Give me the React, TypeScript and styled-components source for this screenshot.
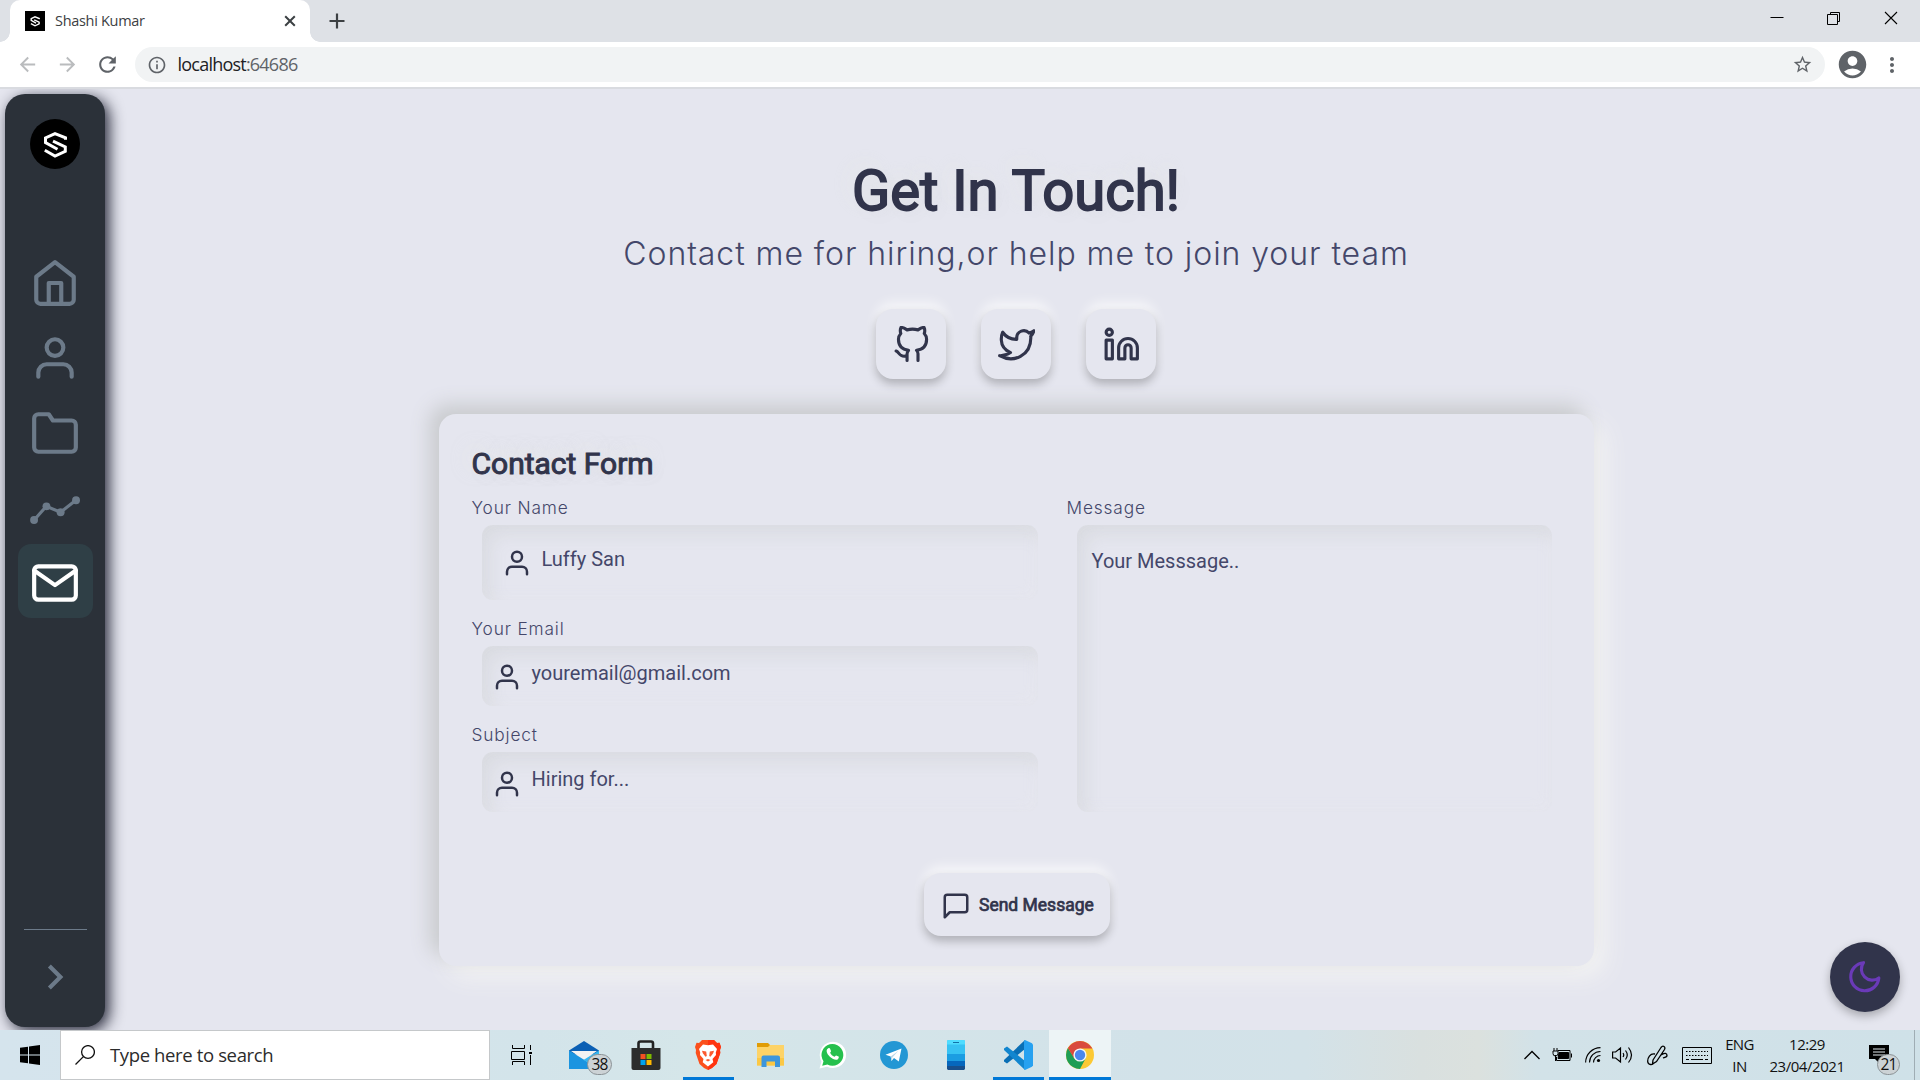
import React from "react";
import styled, { createGlobalStyle } from "styled-components";
import {
  FiFolder,
  FiGithub,
  FiHome,
  FiLinkedin,
  FiMail,
  FiMessageSquare,
  FiMoon,
  FiTwitter,
  FiUser,
} from "react-icons/fi";
import { MdAccountCircle, MdArrowBack, MdArrowForward, MdChevronRight, MdInfoOutline, MdMoreVert, MdRefresh, MdStarBorder } from "react-icons/md";

const BG = "#e5e6ef";
const INK = "#31344b";
const SOFT_INK = "#44476a";
const SIDE = "#2b3139";
const MUTED = "#6c7a89";
const ROBOTO = `Roboto, "Liberation Sans", sans-serif`;
const GEO = `Inter, "Open Sans", sans-serif`;
const SYSTEM = `"Open Sans", "Noto Sans", sans-serif`;

const Global = createGlobalStyle`
  * { box-sizing: border-box; }
  body { margin: 0; background: ${BG}; overflow: hidden; }
  svg { display: block; flex: none; }
`;

const Screen = styled.div`
  width: 1920px;
  height: 1080px;
  display: flex;
  flex-direction: column;
  background: ${BG};
`;

/* ---------- browser ---------- */
const TabStrip = styled.div`
  height: 42px;
  display: flex;
  align-items: flex-start;
  background: #dee1e6;
  padding-left: 10px;
`;
const Tab = styled.div`
  position: relative;
  width: 300px;
  height: 42px;
  background: #fff;
  border-radius: 10px 10px 0 0;
  display: flex;
  align-items: center;
  padding: 0 14px 0 15px;
  &::before,
  &::after {
    content: "";
    position: absolute;
    bottom: 0;
    width: 10px;
    height: 10px;
  }
  &::before {
    left: -10px;
    background: radial-gradient(circle at 0 0, transparent 9.5px, #fff 10px);
  }
  &::after {
    right: -10px;
    background: radial-gradient(circle at 100% 0, transparent 9.5px, #fff 10px);
  }
`;
const TabTitle = styled.span`
  flex: 1;
  margin-left: 10px;
  font: 14.5px/20px ${SYSTEM};
  letter-spacing: -0.3px;
  color: #3c4043;
`;
const NewTab = styled.div`
  padding: 13px 0 0 19px;
`;
const WindowButtons = styled.div`
  margin-left: auto;
  display: flex;
  gap: 43px;
  padding: 11px 22px 0 0;
`;
const Toolbar = styled.div`
  height: 47px;
  display: flex;
  align-items: center;
  background: #fff;
  border-bottom: 2px solid #d9dbe0;
  padding: 0 10px 0 16px;
  color: #5f6368;
`;
const NavIcons = styled.div`
  display: flex;
  gap: 16.5px;
  width: 119px;
  align-items: center;
`;
const Omnibox = styled.div`
  width: 1690px;
  height: 35px;
  border-radius: 18px;
  background: #f1f3f4;
  display: flex;
  align-items: center;
  padding: 0 12px 0 12px;
`;
const Url = styled.span`
  flex: 1;
  margin-left: 10.5px;
  margin-top: -1px;
  font: 18px/24px ${SYSTEM};
  letter-spacing: -0.78px;
  color: #5f6368;
  b {
    font-weight: 400;
    color: #202124;
  }
`;
const Profile = styled.div`
  margin: 0 11px 0 11px;
`;

/* ---------- page ---------- */
const Page = styled.div`
  height: 941px;
  position: relative;
  display: flex;
  overflow: hidden;
  background: ${BG};
`;
const Sidebar = styled.nav`
  width: 100px;
  height: 933px;
  margin: 5px 7px 0 5px;
  border-radius: 20px;
  background: ${SIDE};
  box-shadow: 4px 4px 15px rgba(15, 18, 35, 0.9);
  display: flex;
  flex-direction: column;
  align-items: center;
  padding-top: 25px;
`;
const Brand = styled.div`
  width: 50px;
  height: 50px;
  border-radius: 50%;
  background: #000;
  margin-bottom: 76.5px;
`;
const SideLink = styled.div<{ $active?: boolean }>`
  width: 75px;
  height: ${(p) => (p.$active ? 74 : 75)}px;
  margin-top: ${(p) => (p.$active ? -1.5 : 0)}px;
  padding-top: ${(p) => (p.$active ? 3 : 0)}px;
  border-radius: 13px;
  display: grid;
  place-items: center;
  color: ${(p) => (p.$active ? "#fff" : MUTED)};
  background: ${(p) => (p.$active ? "#2f3f46" : "transparent")};
`;
const SideFooter = styled.div`
  margin-top: auto;
  width: 63px;
  height: 98px;
  border-top: 1px solid ${MUTED};
  color: ${MUTED};
  display: flex;
  justify-content: center;
  padding-top: 22px;
`;
const Main = styled.main`
  flex: 1;
  display: flex;
  flex-direction: column;
  align-items: center;
  padding-top: 67px;
`;
const Heading = styled.h1`
  margin: 0;
  font: 400 56.2px/70px ${ROBOTO};
  -webkit-text-stroke: 1.8px ${INK};
  color: ${INK};
  text-shadow: 6px 6px 18px rgba(0, 0, 0, 0.04), -6px -6px 18px rgba(233, 236, 225, 0.4);
`;
const Lead = styled.p`
  margin: 8px 0 35px;
  font: 300 32px/40px ${GEO};
  letter-spacing: 0.93px;
  color: ${SOFT_INK};
  white-space: nowrap;
`;
const Socials = styled.div`
  display: flex;
  gap: 35px;
  margin-bottom: 35px;
`;
const raised = `
  background: ${BG};
  box-shadow: 0 5px 10px rgba(0, 0, 0, 0.24), 0 -7px 12px rgba(255, 255, 255, 0.65);
  border-radius: 17px;
  color: ${INK};
`;
const Social = styled.a`
  width: 70px;
  height: 70px;
  display: grid;
  place-items: center;
  ${raised}
  svg {
    margin: 1px 0 0 1px;
  }
`;
const Card = styled.section`
  width: 1155px;
  height: 552px;
  margin-left: 1px;
  border-radius: 17px;
  background: ${BG};
  box-shadow: -9px -9px 20px #c8cacd, 10px 10px 24px #f4f4f3;
  padding: 32px 32.5px 0;
  display: flex;
  flex-direction: column;
`;
const CardTitle = styled.h2`
  margin: 0 0 15px;
  font: 400 30px/36px ${ROBOTO};
  -webkit-text-stroke: 1px ${INK};
  color: ${INK};
  text-shadow: 5px 6px 16px rgba(0, 0, 0, 0.06), -5px -5px 16px rgba(238, 240, 228, 0.5);
`;
const Fields = styled.div`
  display: grid;
  grid-template-columns: 595px 1fr;
`;
const Column = styled.div`
  display: flex;
  flex-direction: column;
`;
const Label = styled.label`
  margin-bottom: 7px;
  padding-top: 0.7px;
  font: 300 17.3px/20px ${GEO};
  letter-spacing: 0.85px;
  color: ${SOFT_INK};
`;
const inset = `
  margin-left: 10px;
  border-radius: 11px;
  box-shadow: inset 8px 9px 18px rgba(140, 144, 130, 0.12), inset -4px -4px 12px rgba(235, 236, 242, 0.4);
  font: 400 20px/24px ${ROBOTO};
  color: ${SOFT_INK};
`;
const Field = styled.div<{ $tall?: boolean }>`
  ${inset}
  width: 556px;
  height: ${(p) => (p.$tall ? 75 : 60)}px;
  margin-bottom: 18.5px;
  display: flex;
  padding: ${(p) => (p.$tall ? "22px 20px" : "15px 10px")};
  gap: 10px;
  svg {
    margin-top: 1.5px;
    color: ${INK};
  }
`;
const TextArea = styled.div`
  ${inset}
  width: 475px;
  height: 287px;
  padding: 24px 15px;
`;
const Send = styled.button`
  ${raised}
  align-self: center;
  border: 0;
  width: 186px;
  height: 63px;
  margin: 42.5px 0 0 1px;
  padding: 0 0 0 17px;
  display: flex;
  align-items: center;
  gap: 8px;
  font: 400 17.5px/24px ${ROBOTO};
  -webkit-text-stroke: 0.7px ${INK};
  white-space: nowrap;
  svg {
    margin-top: 3px;
  }
`;
const ThemeToggle = styled.button`
  position: absolute;
  right: 20px;
  bottom: 18px;
  width: 70px;
  height: 70px;
  padding: 0;
  border: 0;
  border-radius: 50%;
  background: ${INK};
  color: #6a3ab8;
  display: grid;
  place-items: center;
  box-shadow: 0 4px 10px rgba(0, 0, 0, 0.28);
`;

/* ---------- taskbar ---------- */
const Taskbar = styled.div`
  height: 50px;
  display: flex;
  background: linear-gradient(90deg, #d5e4ed 0%, #d3e4ea 28%, #d5e6e9 36%, #d2e2e9 60%, #d3e2e8 68%, #d9e0df 74%, #dbe1de 77%, #d2e2e8 80%, #cfe1e8 100%);
  color: #111;
`;
const Start = styled.div`
  width: 60px;
  display: grid;
  place-items: center;
`;
const Search = styled.div`
  width: 430px;
  border: 1px solid #c5c8ca;
  background: #fff;
  display: flex;
  align-items: center;
  padding-left: 14px;
`;
const SearchText = styled.span`
  margin-left: 15px;
  font: 18.5px/24px ${SYSTEM};
  letter-spacing: -0.37px;
  color: #2b2b2b;
`;
const TaskApp = styled.div<{ $running?: boolean; $active?: boolean }>`
  width: 62px;
  height: 50px;
  position: relative;
  display: grid;
  place-items: center;
  background: ${(p) => (p.$active ? "#edf4f6" : "transparent")};
  &::after {
    content: "";
    position: absolute;
    bottom: 0;
    left: ${(p) => (p.$active ? 0 : 6)}px;
    right: ${(p) => (p.$active ? 0 : 5)}px;
    height: 3px;
    background: ${(p) => (p.$running ? "#0078d7" : "transparent")};
  }
`;
const Apps = styled.div`
  display: flex;
  padding-left: 1px;
`;
const Badge = styled.span<{ $x: number; $y: number; $w: number }>`
  position: absolute;
  left: ${(p) => p.$x}px;
  top: ${(p) => p.$y}px;
  width: ${(p) => p.$w}px;
  height: 21px;
  border-radius: 11px;
  border: 1px solid #8b9296;
  background: #ccd2d5;
  font: 500 15.5px/18px ${SYSTEM};
  letter-spacing: -0.8px;
  text-align: center;
  color: #111;
`;
const Tray = styled.div`
  margin-left: auto;
  display: flex;
  align-items: center;
`;
const TraySlot = styled.div<{ $w: number }>`
  width: ${(p) => p.$w}px;
  display: flex;
`;
const TwoLine = styled.div<{ $w: number; $gap?: number; $track?: number }>`
  width: ${(p) => p.$w}px;
  margin: -1px ${(p) => p.$gap ?? 0}px 0 0;
  text-align: center;
  font: 15px/22px ${SYSTEM};
  letter-spacing: ${(p) => p.$track ?? -0.5}px;
  white-space: pre-line;
`;
const Action = styled.div`
  position: relative;
  width: 45px;
  height: 50px;
  padding-top: 15px;
`;
const ShowDesktop = styled.div`
  width: 6px;
  height: 50px;
  border-left: 1px solid #9fadb4;
`;

const SMark = ({ size, color = "#fff" }: { size: number; color?: string }) => (
  <svg width={size} height={size} viewBox="0 0 50 50" fill="none" stroke={color} strokeWidth="3">
    <path d="M35.500 20.800V18.800L25 14.600 15.500 19v4.600L27.500 30.200" />
    <path d="M23 22.200 35.300 28v4.300L25 37 14.800 31.300" />
  </svg>
);

const Timeline = () => (
  <svg width="50" height="50" viewBox="0 0 24 24" fill="currentColor">
    <path d="M2 17.8 7.8 11.2 14.7 14 22 8.3" fill="none" stroke="currentColor" strokeWidth="1.5" />
    <circle cx="1.95" cy="17.8" r="1.9" />
    <circle cx="7.9" cy="11.2" r="1.9" />
    <circle cx="14.7" cy="14" r="1.9" />
    <circle cx="22.1" cy="8.3" r="1.9" />
  </svg>
);

const Line = ({ w, h, d, sw = 1.2, fill = "none" }: { w: number; h: number; d: string; sw?: number; fill?: string }) => (
  <svg width={w} height={h} viewBox={`0 0 ${w} ${h}`} fill={fill} stroke="#000" strokeWidth={sw}>
    <path d={d} />
  </svg>
);

const MailIcon = () => (
  <svg width="30" height="30" viewBox="0 0 30 30">
    <path d="M0 10.500 15 1l15 9.500v4H0z" fill="#0a5fb4" />
    <path d="M2 11h26L15 20z" fill="#f2f2f2" />
    <path d="M0 10.500l30 18.500H0z" fill="#1b94e0" />
    <path d="M30 10.500v18.500L14.500 20z" fill="#35b5ef" />
  </svg>
);
const StoreIcon = () => (
  <svg width="30" height="30" viewBox="0 0 30 30">
    <path d="M7.500 9V3.500q0-2 2-2h10.500q2 0 2 2V9" fill="none" stroke="#222" strokeWidth="2.600" />
    <path d="M.5 8h29v20a2 2 0 0 1-2 2h-25a2 2 0 0 1-2-2z" fill="#2d2d2d" />
    <path d="M9.500 14h5v5h-5z" fill="#f25022" />
    <path d="M15.500 14h5v5h-5z" fill="#7fba00" />
    <path d="M9.500 20h5v5h-5z" fill="#00a4ef" />
    <path d="M15.500 20h5v5h-5z" fill="#ffb900" />
  </svg>
);
const BraveIcon = () => (
  <svg width="26" height="30" viewBox="0 0 26 30">
    <path d="M7 0h12l3 3 2.500-.3L26 7l-1 3 .3 3-3.800 11L17 28l-4 2-4-2-4.500-4L.7 13 1 10 0 7l1.500-4.300L4 3z" fill="#fb4f1c" />
    <path d="M13 0h6l3 3 2.500-.3L26 7l-1 3 .3 3-3.800 11L17 28l-4 2z" fill="#ff3410" />
    <path d="M8 4.500l5 .8 5-.8 4 4.500-1.200 3.500.2 2.500-3.500 4 .8 3.200L13 26.500l-5.300-4.300.8-3.200L5 15l.2-2.500L4 9z" fill="#fff" />
    <path d="M7 10.800l4.200.8.6 4.400-1.300.8-2.700-3.600zM19 10.800l-4.200.8-.6 4.400 1.300.8 2.700-3.600zM10.500 20l2.500-1 2.500 1-2.500 1.600z" fill="#fb5a30" />
  </svg>
);
const FolderIcon = () => (
  <svg width="27" height="24" viewBox="0 0 27 24">
    <path d="M0 0h11l2 2v5H0z" fill="#e09c06" />
    <path d="M0 4h11l2-2h14v20.500H0z" fill="#fdd367" />
    <path d="M0 15h27v7.500H0z" fill="#fbc845" />
    <path d="M4.500 24V14.500q0-2 2-2h14.500q2 0 2 2V24h-5v-5.500h-8.500V24z" fill="#3d96dc" />
  </svg>
);
const WhatsAppIcon = () => (
  <svg width="27" height="28" viewBox="0 0 27 28">
    <path d="M.5 27.500l2-7A13.200 13.200 0 1 1 8 25.700z" fill="#fff" />
    <path d="M3.200 24.800l1.300-4.600A10.900 10.900 0 1 1 8.400 23.600z" fill="#25c04d" />
    <path d="M9.300 7.300c.9-.5 1.500-.2 1.800.5l.9 2.100c.2.600-.8 1.500-.9 1.800.9 1.900 2.400 3.200 4.300 4 .4.100 1.200-1.400 1.700-1.300l2.500 1.200c.6.500-.1 2.300-1 2.800-3.100 1.800-10.700-3.400-11-8.300 0-1.300.8-2.300 1.700-2.800z" fill="#fff" />
  </svg>
);
const TelegramIcon = () => (
  <svg width="28" height="28" viewBox="0 0 28 28">
    <circle cx="14" cy="14" r="14" fill="#2397d4" />
    <path d="M5.500 13.800 21.500 7.500 18.800 20.500 14 17l-2.500 3-.8-4.500z" fill="#fff" />
    <path d="M10.700 15.500 18.500 9.800l-6 6.500-1 3.700z" fill="#bcd8e8" />
  </svg>
);
const PhoneIcon = () => (
  <svg width="18" height="30" viewBox="0 0 18 30">
    <path d="M1 0h16l1 1v13H0V1z" fill="#37c2f3" />
    <path d="M1 0h16l1 1v3.500H0V1z" fill="#4fdcff" />
    <path d="M0 14h18v7H0z" fill="#1b9de2" />
    <path d="M0 21h18v5H0z" fill="#0667bd" />
    <path d="M0 26h18v3l-1 1H1l-1-1z" fill="#184f8c" />
    <path d="M6 2h6v1H6z" fill="#1172a8" />
  </svg>
);
const CodeIcon = () => (
  <svg width="30" height="30" viewBox="0 0 30 30">
    <path d="M22 0v9L4 23.500 1 21.500V20z" fill="#0a6fb5" />
    <path d="M22 30v-9L4 6.500 1 8.500V10z" fill="#1286cf" />
    <path d="M22 0l7 3.200 1 1.500v20.600l-1 1.500L22 30l-1-1V1z" fill="#27a1f0" />
  </svg>
);
const ChromeIcon = () => (
  <svg width="28" height="28" viewBox="0 0 28 28">
    <circle cx="14" cy="14" r="14" fill="#fcc934" />
    <path d="M14 14l-5.500 3.200L1.900 7A14 14 0 0 0 14 28l5.700-10.800z" fill="#1e9e55" />
    <path d="M14 7.500h12.400L26.100 7A14 14 0 0 0 1.900 7l6 10z" fill="#d94a3d" />
    <circle cx="14" cy="14" r="6.600" fill="#f5f5f5" />
    <circle cx="14" cy="14" r="5.200" fill="#4b87ee" />
  </svg>
);

export default function App() {
  return (
    <Screen>
      <Global />
      <TabStrip>
        <Tab>
          <svg width="20" height="20" viewBox="0 0 50 50">
            <path d="M0 0h50v50H0z" />
            <path d="M35.500 20.800V18.800L25 14.600 15.500 19v4.600L27.500 30.200M23 22.200 35.300 28v4.300L25 37 14.800 31.300" fill="none" stroke="#fff" strokeWidth="3.500" />
          </svg>
          <TabTitle>Shashi Kumar</TabTitle>
          <svg width="12" height="12" viewBox="0 0 12 12" stroke="#3c4043" strokeWidth="2">
            <path d="M1.200 1.200l9.600 9.600M10.800 1.200 1.200 10.800" />
          </svg>
        </Tab>
        <NewTab>
          <svg width="16" height="16" viewBox="0 0 16 16" stroke="#3c4043" strokeWidth="2.200">
            <path d="M8 .5v15M.5 8h15" />
          </svg>
        </NewTab>
        <WindowButtons>
          <Line w={14} h={14} d="M.5 6.500h13" sw={1} />
          <Line w={14} h={14} d="M.500 3.500h10v10h-10zM3.500 3.500V1.500h9v9h-2" sw={1} />
          <Line w={14} h={14} d="M1 1l12 12M13 1 1 13" sw={1.1} />
        </WindowButtons>
      </TabStrip>
      <Toolbar>
        <NavIcons>
          <MdArrowBack size={23} color="#babcbe" />
          <MdArrowForward size={23} color="#babcbe" />
          <MdRefresh size={25} />
        </NavIcons>
        <Omnibox>
          <MdInfoOutline size={20} />
          <Url>
            <b>localhost</b>:64686
          </Url>
          <MdStarBorder size={21} />
        </Omnibox>
        <Profile>
          <MdAccountCircle size={33} />
        </Profile>
        <MdMoreVert size={24} />
      </Toolbar>

      <Page>
        <Sidebar>
          <Brand>
            <SMark size={50} />
          </Brand>
          <SideLink><FiHome size={50} /></SideLink>
          <SideLink><FiUser size={50} /></SideLink>
          <SideLink><FiFolder size={50} /></SideLink>
          <SideLink><Timeline /></SideLink>
          <SideLink $active><FiMail size={50} /></SideLink>
          <SideFooter>
            <MdChevronRight size={50} />
          </SideFooter>
        </Sidebar>
        <Main>
          <Heading>Get In Touch!</Heading>
          <Lead>Contact me for hiring,or help me to join your team</Lead>
          <Socials>
            <Social><FiGithub size={37.5} /></Social>
            <Social><FiTwitter size={37.5} /></Social>
            <Social><FiLinkedin size={37.5} /></Social>
          </Socials>
          <Card>
            <CardTitle>Contact Form</CardTitle>
            <Fields>
              <Column>
                <Label>Your Name</Label>
                <Field $tall><FiUser size={30} />Luffy San</Field>
                <Label>Your Email</Label>
                <Field><FiUser size={30} />youremail@gmail.com</Field>
                <Label>Subject</Label>
                <Field><FiUser size={30} />Hiring for...</Field>
              </Column>
              <Column>
                <Label>Message</Label>
                <TextArea>Your Messsage..</TextArea>
              </Column>
            </Fields>
            <Send>
              <FiMessageSquare size={30} />
              Send Message
            </Send>
          </Card>
        </Main>
        <ThemeToggle>
          <FiMoon size={37.5} />
        </ThemeToggle>
      </Page>

      <Taskbar>
        <Start>
          <svg width="20" height="20" viewBox="0 0 20 20">
            <path d="M0 2.800 8 1.700V9.400H0zM9 1.500 20 0v9.400H9zM0 10.400h8v7.900L0 17.200zM9 10.400h11V20L9 18.500z" />
          </svg>
        </Start>
        <Search>
          <svg width="20" height="20" viewBox="0 0 20 20" fill="none" stroke="#111" strokeWidth="1.300">
            <circle cx="13" cy="7" r="6.400" />
            <path d="M8.400 11.600.5 19.500" />
          </svg>
          <SearchText>Type here to search</SearchText>
        </Search>
        <Apps>
          <TaskApp>
            <Line w={23} h={20} d="M1.500 0v3.500h12V0M.5 6.500h13v8H.5zM1.500 20v-3.500h12V20M19.500 0v5M19.500 10v10M18 7.500h3M18 8.500h3" sw={1} />
          </TaskApp>
          <TaskApp>
            <MailIcon />
            <Badge $x={34} $y={24} $w={25}>38</Badge>
          </TaskApp>
          <TaskApp><StoreIcon /></TaskApp>
          <TaskApp $running><BraveIcon /></TaskApp>
          <TaskApp><FolderIcon /></TaskApp>
          <TaskApp><WhatsAppIcon /></TaskApp>
          <TaskApp><TelegramIcon /></TaskApp>
          <TaskApp><PhoneIcon /></TaskApp>
          <TaskApp $running><CodeIcon /></TaskApp>
          <TaskApp $running $active><ChromeIcon /></TaskApp>
        </Apps>
        <Tray>
          <TraySlot $w={28}>
            <Line w={16} h={10} d="M.5 9 8 1.500 15.500 9" sw={1.3} />
          </TraySlot>
          <TraySlot $w={33}>
            <svg width="20" height="14" viewBox="0 0 20 14" fill="none" stroke="#000">
              <path d="M6 2.500h12v10H4.500V9M19.500 5.500v4M1 3h5v2.500a2 2 0 0 1-5 0zM2 0v3M5 0v3M3.500 7v6" />
              <path d="M7 4.500h9.500v6H6z" fill="#000" />
            </svg>
          </TraySlot>
          <TraySlot $w={27}>
            <svg width="16" height="16" viewBox="0 0 16 16" fill="none" stroke="#000" strokeWidth="1.100">
              <path d="M.600 15.500A15 15 0 0 1 15.500.600M4.500 15.500a11 11 0 0 1 11-11M8.500 15.500a7 7 0 0 1 7-7" />
              <circle cx="13.500" cy="13.500" r="1.600" fill="#000" stroke="none" />
            </svg>
          </TraySlot>
          <TraySlot $w={35}>
            <Line w={21} h={18} d="M.6 6h3L8.500 2v14L3.600 12h-3zM11 7q1.500 2 0 4M13.500 4.500q3.500 4.500 0 9M16.500 1.500q6 7.500 0 15" />
          </TraySlot>
          <TraySlot $w={35}>
            <svg width="21" height="21" viewBox="0 0 21 21" fill="none" stroke="#000" strokeWidth="1.300">
              <path d="M6 15 14 2.500q1.500-2 3-1t.500 3L9.500 16.500l-4 2.500zM8 9C3 8 .5 13 .7 16.500 1 20.500 6 20 6.500 18M14 10c4-3 6-1.500 6 .5s-3 2-4 2.500" />
            </svg>
          </TraySlot>
          <TraySlot $w={39}>
            <svg width="30" height="17" viewBox="0 0 30 17" fill="none" stroke="#000">
              <path d="M.5.500h29v16H.500z" />
              <path d="M4 4.500h22M4 8.500h22" strokeDasharray="1.500 1.500" />
              <path d="M4 12.500h3M9 12.500h12M23 12.500h3" />
            </svg>
          </TraySlot>
          <TwoLine $w={37} $track={-0.6}>{"ENG\nIN"}</TwoLine>
          <TwoLine $w={98} $gap={13} $track={-0.45}>{"12:29\n23/04/2021"}</TwoLine>
          <Action>
            <svg width="20" height="18" viewBox="0 0 20 18">
              <path d="M0 0h20v14h-8l-2 4-4-4H0z" />
              <path d="M4 4h12M4 7h12M4 10h12" stroke="#dfe8ec" strokeWidth="1.200" />
            </svg>
            <Badge $x={8} $y={24} $w={23}>21</Badge>
          </Action>
          <ShowDesktop />
        </Tray>
      </Taskbar>
    </Screen>
  );
}
